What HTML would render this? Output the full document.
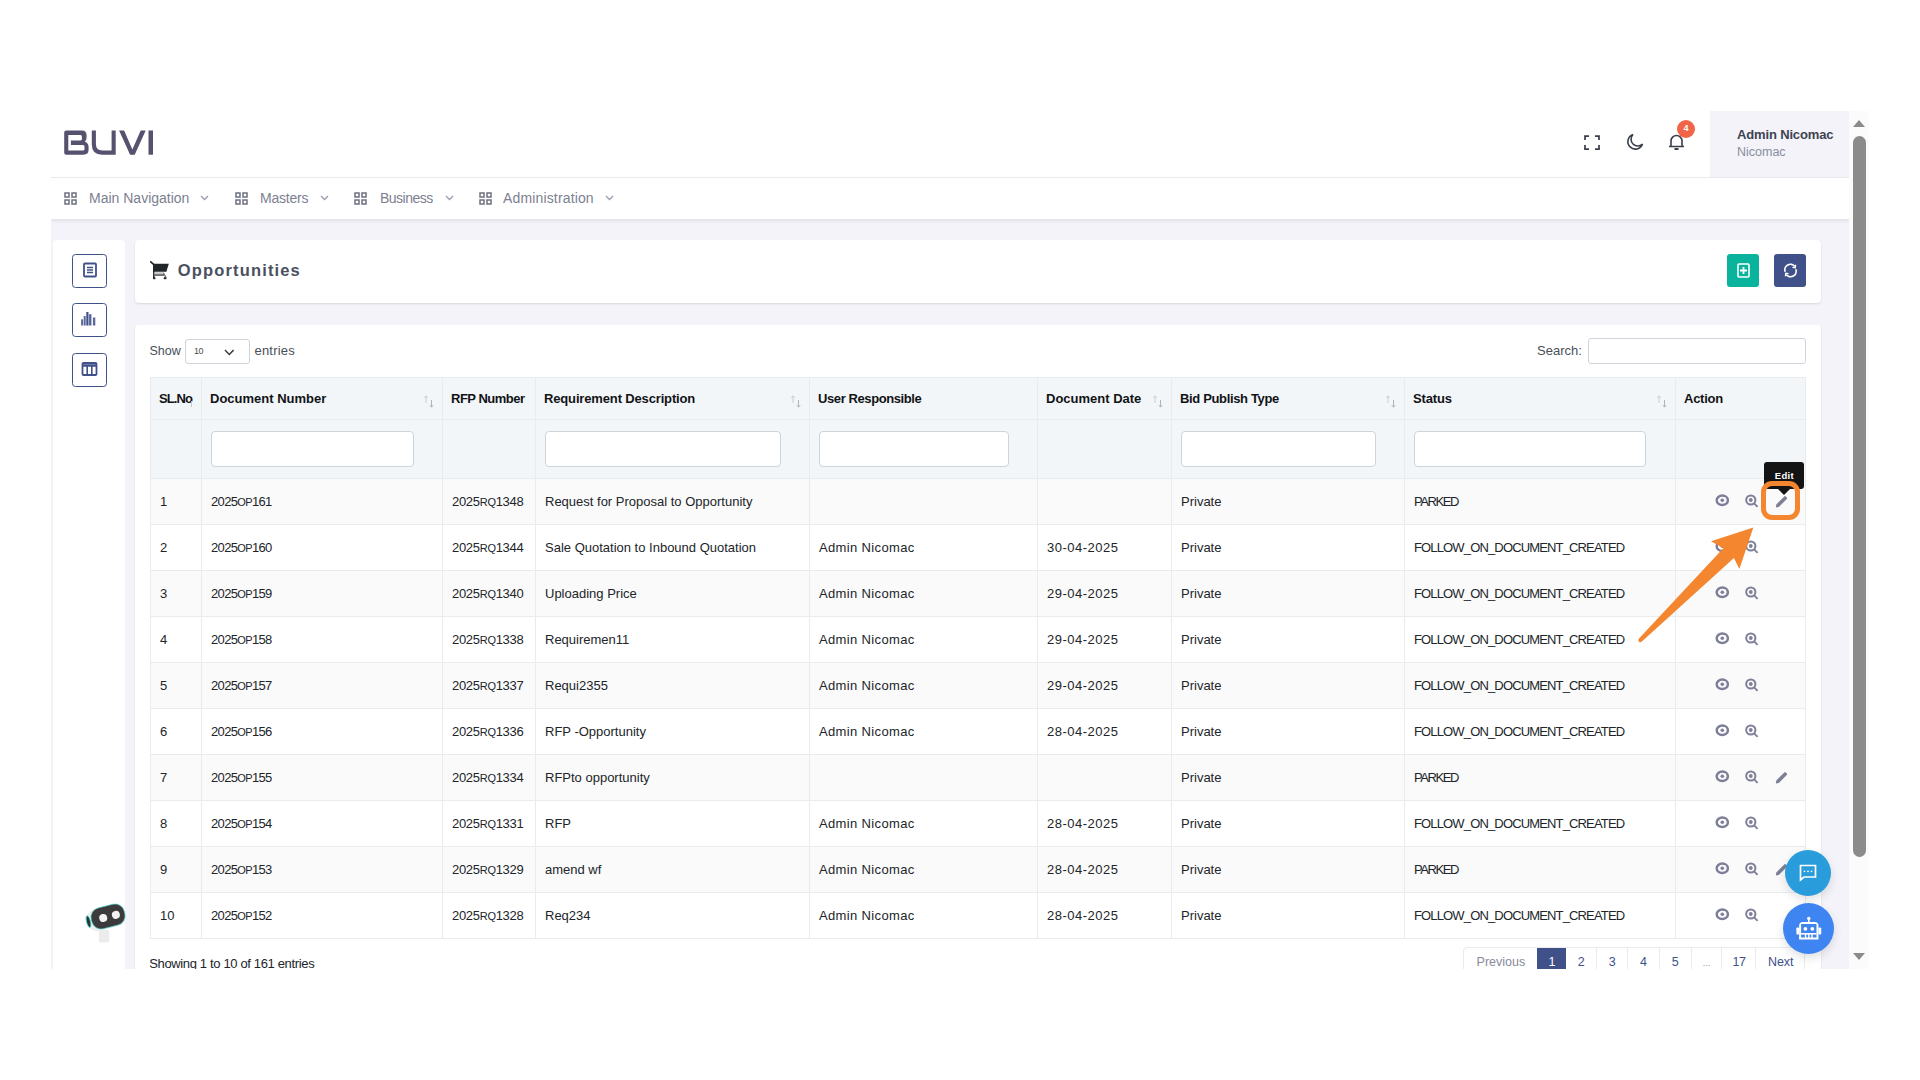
<!DOCTYPE html>
<html><head><meta charset="utf-8">
<style>
*{box-sizing:border-box;margin:0;padding:0}
html,body{width:1920px;height:1080px;overflow:hidden;background:#fff;font-family:"Liberation Sans",sans-serif;color:#212529}
.abs{position:absolute}
#app{position:absolute;left:51px;top:111px;width:1798px;height:858px;overflow:hidden;background:#f3f3f9}
#hdr{position:absolute;left:0;top:0;width:1798px;height:66.8px;background:#fff;border-bottom:1px solid #e9ebec}
#user{position:absolute;left:1659px;top:0;width:139px;height:65.6px;background:#f3f3f9}
#nav{position:absolute;left:0;top:66.8px;width:1798px;height:41.6px;background:#fff;box-shadow:0 2px 3px rgba(56,65,74,.10)}
.nv{position:absolute;top:12.5px;font-size:14px;color:#7d8090;white-space:nowrap}
.card{position:absolute;background:#fff;border-radius:4px;box-shadow:0 1px 2px rgba(56,65,74,.15)}
.sbox{position:absolute;left:19px;width:35px;height:34px;border:1.9px solid #405189;border-radius:3.5px}
#sb{position:absolute;left:1849px;top:111px;width:20px;height:858px;background:#fbfbfb}
table{border-collapse:collapse;table-layout:fixed;position:absolute;left:15.5px;top:52px;width:1656px}
td,th{border:1px solid #e9ebec;font-size:13px;white-space:nowrap;overflow:hidden;padding:0 9px;text-align:left;vertical-align:middle}
th{font-weight:700;background:#f3f6f9;height:41.5px;position:relative;color:#111316;padding-left:8px}
tr.f td{background:#f3f6f9;height:59.5px}
tr.r td{height:46px;color:#212529}
tr.r:nth-child(odd) td{background:#fafafa}
.fi{display:block;height:36px;border:1px solid #ced4da;border-radius:4px;background:#fff}
.sc{font-variant:small-caps;font-size:15.5px;line-height:0}
td.dn{letter-spacing:-0.65px}
td.rn{letter-spacing:-0.3px}
td.dt{letter-spacing:0.5px}
td.un{letter-spacing:0.35px}
.st{letter-spacing:-0.85px}
.pk{letter-spacing:-1.4px}
.srt{position:absolute;top:17px;right:8px;width:10px;height:13px}

.act{position:relative;height:45px}
td.ac{padding:0}
.ic{position:absolute;top:15px}
.pg{position:absolute;top:0;height:22px;border-left:1px solid #e9ebec;font-size:12.5px;color:#405189;text-align:center;padding-top:6px}
</style></head><body>

<div id="app">
  <!-- header -->
  <div id="hdr">
    <svg class="abs" style="left:9px;top:14px" width="100" height="35" viewBox="60 125 100 35">
      <path fill="#56516f" fill-rule="evenodd" d="M64.2,132.5 Q64.2,130.5 66.2,130.5 H82 Q86.6,130.5 86.6,135.5 V137 Q86.6,140.2 84.8,141.6 Q88.6,143 88.6,147.5 V149.5 Q88.6,154.7 83.4,154.7 H66.2 Q64.2,154.7 64.2,152.7 Z M68.3,135 H80.5 Q81.9,135 81.9,136.5 V139 Q81.9,140.4 80.5,140.4 H70.9 V145 H83 Q84.5,145 84.5,146.5 V149 Q84.5,150.5 83,150.5 H68.3 Z"/>
      <path fill="#56516f" d="M91.8,130.5 H95.9 V144 Q95.9,150.5 102.4,150.5 H111.6 V130.5 H115.7 V154.7 H102 Q91.8,154.7 91.8,144.5 Z"/>
      <path fill="#56516f" d="M119.1,130.5 H124.1 L132.4,149.5 L140.7,130.5 H145.7 L134.7,154.7 H130.1 Z"/>
      <rect fill="#56516f" x="148.5" y="130.5" width="4.5" height="24.2"/>
    </svg>
    <!-- fullscreen -->
    <svg class="abs" style="left:1533px;top:24px" width="16" height="15" viewBox="0 0 16 15" fill="none" stroke="#3a3f4a" stroke-width="1.75">
      <path d="M1,5 V1 H5 M11,1 H15 V5 M15,10 V14 H11 M5,14 H1 V10"/>
    </svg>
    <!-- moon -->
    <svg class="abs" style="left:1574px;top:22px" width="19" height="18" viewBox="0 0 19 18" fill="none" stroke="#3a3f4a" stroke-width="1.6">
      <path d="M8,1.5 A7.5,7.5 0 1 0 17.5,11 A6,6 0 0 1 8,1.5 Z"/>
    </svg>
    <!-- bell -->
    <svg class="abs" style="left:1617px;top:23px" width="17" height="17" viewBox="0 0 17 17" fill="none" stroke="#3a3f4a" stroke-width="1.6">
      <path d="M3,12 V7 A5.5,5.5 0 0 1 14,7 V12 M1,12.5 H16"/><path d="M6.5,15 H10.5" stroke-width="2"/>
    </svg>
    <div class="abs" style="left:1626px;top:9px;width:18px;height:18px;border-radius:9px;background:#f06548;color:#fff;font-size:9px;font-weight:700;text-align:center;line-height:17px">4</div>
    <div id="user">
      <div class="abs" style="left:27px;top:16px;font-size:13px;font-weight:700;color:#3d4351;white-space:nowrap;letter-spacing:-0.15px">Admin Nicomac</div>
      <div class="abs" style="left:27px;top:34px;font-size:12.5px;color:#8a8ca0;white-space:nowrap">Nicomac</div>
    </div>
  </div>
  <!-- nav -->
  <div id="nav">
    <svg class="abs" style="left:13px;top:14px" width="13" height="13" viewBox="0 0 13 13" fill="none" stroke="#6d7080" stroke-width="1.5"><rect x="1" y="1" width="4" height="4"/><rect x="8" y="1" width="4" height="4"/><rect x="1" y="8" width="4" height="4"/><rect x="8" y="8" width="4" height="4"/></svg>
    <div class="nv" style="left:38px">Main Navigation</div>
    <svg class="abs" style="left:149px;top:17px" width="9" height="6" viewBox="0 0 9 6" fill="none" stroke="#9a9dab" stroke-width="1.3"><path d="M1,1 L4.5,4.5 L8,1"/></svg>
    <svg class="abs" style="left:184px;top:14px" width="13" height="13" viewBox="0 0 13 13" fill="none" stroke="#6d7080" stroke-width="1.5"><rect x="1" y="1" width="4" height="4"/><rect x="8" y="1" width="4" height="4"/><rect x="1" y="8" width="4" height="4"/><rect x="8" y="8" width="4" height="4"/></svg>
    <div class="nv" style="left:209px;letter-spacing:-0.2px">Masters</div>
    <svg class="abs" style="left:269px;top:17px" width="9" height="6" viewBox="0 0 9 6" fill="none" stroke="#9a9dab" stroke-width="1.3"><path d="M1,1 L4.5,4.5 L8,1"/></svg>
    <svg class="abs" style="left:303px;top:14px" width="13" height="13" viewBox="0 0 13 13" fill="none" stroke="#6d7080" stroke-width="1.5"><rect x="1" y="1" width="4" height="4"/><rect x="8" y="1" width="4" height="4"/><rect x="1" y="8" width="4" height="4"/><rect x="8" y="8" width="4" height="4"/></svg>
    <div class="nv" style="left:329px;letter-spacing:-0.5px">Business</div>
    <svg class="abs" style="left:394px;top:17px" width="9" height="6" viewBox="0 0 9 6" fill="none" stroke="#9a9dab" stroke-width="1.3"><path d="M1,1 L4.5,4.5 L8,1"/></svg>
    <svg class="abs" style="left:428px;top:14px" width="13" height="13" viewBox="0 0 13 13" fill="none" stroke="#6d7080" stroke-width="1.5"><rect x="1" y="1" width="4" height="4"/><rect x="8" y="1" width="4" height="4"/><rect x="1" y="8" width="4" height="4"/><rect x="8" y="8" width="4" height="4"/></svg>
    <div class="nv" style="left:452px;letter-spacing:0.15px">Administration</div>
    <svg class="abs" style="left:554px;top:17px" width="9" height="6" viewBox="0 0 9 6" fill="none" stroke="#9a9dab" stroke-width="1.3"><path d="M1,1 L4.5,4.5 L8,1"/></svg>
  </div>

  <!-- sidebar card -->
  <div class="card" style="left:2px;top:129px;width:72px;height:760px;box-shadow:none">
    <div class="sbox" style="top:14px"><svg class="abs" style="left:9px;top:7px" width="16" height="16" viewBox="0 0 16 16" fill="none" stroke="#405189" stroke-width="1.8"><rect x="2" y="1.5" width="12" height="13" rx="1"/><path d="M5,5.5 H11 M5,8 H11 M5,10.5 H11" stroke-width="1.4"/></svg></div>
    <div class="sbox" style="top:62.5px"><svg class="abs" style="left:8px;top:7px" width="17" height="17" viewBox="0 0 17 17" fill="#405189"><rect x="0.1" y="8.3" width="2" height="6.2" opacity=".85"/><rect x="2.7" y="5" width="2" height="9.5" opacity=".85"/><rect x="5.3" y="1" width="2.2" height="13.5"/><rect x="8.1" y="3.2" width="2.3" height="11.3" opacity=".9"/><rect x="11.9" y="6.5" width="2.4" height="8" opacity=".85"/></svg></div>
    <div class="sbox" style="top:112.5px"><svg class="abs" style="left:8px;top:7px" width="17" height="16" viewBox="0 0 17 16" fill="none" stroke="#405189" stroke-width="1.8"><rect x="1.5" y="2" width="14" height="12" rx="1"/><path d="M1.5,4.5 H15.5" stroke-width="2.5"/><path d="M6.2,5 V14 M10.8,5 V14" stroke-width="1.6"/></svg></div>
  </div>

  <!-- title card -->
  <div class="card" style="left:83.5px;top:129px;width:1686.5px;height:62.8px">
    <svg class="abs" style="left:15px;top:21px" width="20" height="20" viewBox="0 0 20 20"><path d="M0.8,0.8 L3.6,3.4" stroke="#212529" stroke-width="1.7" stroke-linecap="round"/><rect x="3" y="3" width="1.6" height="14.5" fill="#2a2e33"/><path d="M3,2.8 H18.8 L16.4,10.8 H3 Z" fill="#212529"/><rect x="4.5" y="11.2" width="9.5" height="2.1" fill="#c3c5c8"/><rect x="4.5" y="13.3" width="9.5" height="1.5" fill="#4a4d52"/><path d="M13.5,12 L16,16.5" stroke="#6a6d72" stroke-width="1.3"/><rect x="3.2" y="16.2" width="2.2" height="2" fill="#212529"/><rect x="13.8" y="16.2" width="2.6" height="2" fill="#212529"/></svg><div class="abs" style="left:43.3px;top:20.8px;font-size:16.5px;font-weight:700;color:#4a5060;letter-spacing:1.15px;white-space:nowrap">Opportunities</div>
    <div class="abs" style="left:1592.5px;top:14px;width:32px;height:33px;background:#0ab39c;border-radius:3px"><svg class="abs" style="left:9.5px;top:9px" width="13" height="15" viewBox="0 0 13 15" fill="none" stroke="#fff" stroke-width="1.6"><rect x="1" y="1" width="11" height="13" rx="1"/><path d="M6.5,4 V11 M3,7.5 H10" stroke-width="1.8"/></svg></div>
    <div class="abs" style="left:1639.5px;top:14px;width:32px;height:33px;background:#405189;border-radius:3px"><svg class="abs" style="left:9px;top:9px" width="15" height="15" viewBox="0 0 15 15" fill="none" stroke="#fff" stroke-width="1.7"><path d="M2.2,8.8 A5.5,5.5 0 0 1 11.8,3.6"/><path d="M12.8,6.2 A5.5,5.5 0 0 1 3.2,11.4"/><path d="M12.6,1.8 L12.3,4.8 L9.4,4.4" stroke-width="1.3"/><path d="M2.4,13.2 L2.7,10.2 L5.6,10.6" stroke-width="1.3"/></svg></div>
  </div>

  <!-- table card -->
  <div class="card" id="tc" style="left:83.5px;top:214px;width:1686.5px;height:700px">
    <div class="abs" style="left:15px;top:19px;font-size:12.5px;color:#495057">Show</div>
    <div class="abs" style="left:50.5px;top:13.6px;width:65px;height:25.5px;border:1px solid #ced4da;border-radius:3px;background:#fff"><span class="abs" style="left:8px;top:6.8px;font-size:9px;color:#495057;letter-spacing:-0.6px">10</span><svg class="abs" style="left:37.8px;top:9px" width="10.5" height="7" viewBox="0 0 11 7" fill="none" stroke="#343a40" stroke-width="1.5"><path d="M1,1 L5.5,5.5 L10,1"/></svg></div>
    <div class="abs" style="left:120px;top:17.5px;font-size:13px;color:#495057;letter-spacing:0.2px">entries</div>
    <div class="abs" style="left:1402.5px;top:18.3px;font-size:13px;color:#495057">Search:</div>
    <div class="abs" style="left:1453px;top:13.3px;width:218px;height:26px;border:1px solid #ced4da;border-radius:3px;background:#fff"></div>

    <table>
      <colgroup><col style="width:51px"><col style="width:241px"><col style="width:93px"><col style="width:274px"><col style="width:228px"><col style="width:134px"><col style="width:233px"><col style="width:271px"><col style="width:130px"></colgroup>
      <tr><th style="letter-spacing:-0.9px">SL.No<span class="abs" style="left:40px;top:23px;width:1px;height:6px;background:#c3c6cb"></span></th><th>Document Number<svg class="srt" width="10" height="13" viewBox="0 0 10 13"><path d="M2,1 V8 M0.3,2.8 L2,0.8 L3.7,2.8" fill="none" stroke="#c9ccd1" stroke-width="1"/><path d="M7.5,5 V12 M5.8,10.2 L7.5,12.2 L9.2,10.2" fill="none" stroke="#b0b4ba" stroke-width="1"/></svg></th><th style="letter-spacing:-0.5px">RFP Number</th><th style="letter-spacing:-0.15px">Requirement Description<svg class="srt" width="10" height="13" viewBox="0 0 10 13"><path d="M2,1 V8 M0.3,2.8 L2,0.8 L3.7,2.8" fill="none" stroke="#c9ccd1" stroke-width="1"/><path d="M7.5,5 V12 M5.8,10.2 L7.5,12.2 L9.2,10.2" fill="none" stroke="#b0b4ba" stroke-width="1"/></svg></th><th style="letter-spacing:-0.4px">User Responsible</th><th>Document Date<svg class="srt" width="10" height="13" viewBox="0 0 10 13"><path d="M2,1 V8 M0.3,2.8 L2,0.8 L3.7,2.8" fill="none" stroke="#c9ccd1" stroke-width="1"/><path d="M7.5,5 V12 M5.8,10.2 L7.5,12.2 L9.2,10.2" fill="none" stroke="#b0b4ba" stroke-width="1"/></svg></th><th style="letter-spacing:-0.35px">Bid Publish Type<svg class="srt" width="10" height="13" viewBox="0 0 10 13"><path d="M2,1 V8 M0.3,2.8 L2,0.8 L3.7,2.8" fill="none" stroke="#c9ccd1" stroke-width="1"/><path d="M7.5,5 V12 M5.8,10.2 L7.5,12.2 L9.2,10.2" fill="none" stroke="#b0b4ba" stroke-width="1"/></svg></th><th style="letter-spacing:-0.15px">Status<svg class="srt" width="10" height="13" viewBox="0 0 10 13"><path d="M2,1 V8 M0.3,2.8 L2,0.8 L3.7,2.8" fill="none" stroke="#c9ccd1" stroke-width="1"/><path d="M7.5,5 V12 M5.8,10.2 L7.5,12.2 L9.2,10.2" fill="none" stroke="#b0b4ba" stroke-width="1"/></svg></th><th style="letter-spacing:-0.25px">Action</th></tr>
      <tr class="f"><td></td><td><span class="fi" style="width:203px"></span></td><td></td><td><span class="fi" style="width:236px"></span></td><td><span class="fi" style="width:190px"></span></td><td></td><td><span class="fi" style="width:195px"></span></td><td><span class="fi" style="width:232px"></span></td><td></td></tr>
          <tr class="r"><td>1</td><td class="dn">2025<span class=sc>op</span>161</td><td class="rn">2025<span class=sc>rq</span>1348</td><td>Request for Proposal to Opportunity</td><td></td><td class="dt"></td><td>Private</td><td class="pk">PARKED</td><td class="ac"><div class="act"><svg class="ic" style="left:39px;top:14.6px" width="15" height="13" viewBox="0 0 15 13"><ellipse cx="7.3" cy="6.3" rx="5.6" ry="4.7" fill="none" stroke="#7c7f97" stroke-width="2.5"/><circle cx="7.3" cy="6.3" r="1.8" fill="#7c7f97"/></svg><svg class="ic" style="left:68.6px;top:14.6px" width="14" height="14" viewBox="0 0 14 14"><circle cx="5.8" cy="6" r="4.6" fill="none" stroke="#7c7f97" stroke-width="2"/><path d="M9.2,9.4 L12.6,12.8" stroke="#7c7f97" stroke-width="1.9"/><circle cx="5.8" cy="6" r="1.9" fill="#7c7f97"/></svg><svg class="ic" style="left:98.5px;top:15.5px" width="13" height="13" viewBox="0 0 13 13"><path d="M0.8,12.4 L1.3,9.4 L9.3,1.4 Q10,0.7 10.7,1.4 L11.8,2.5 Q12.5,3.2 11.8,3.9 L3.8,11.9 Z" fill="#7c7f97"/></svg></div></td></tr>
      <tr class="r"><td>2</td><td class="dn">2025<span class=sc>op</span>160</td><td class="rn">2025<span class=sc>rq</span>1344</td><td>Sale Quotation to Inbound Quotation</td><td class="un">Admin Nicomac</td><td class="dt">30-04-2025</td><td>Private</td><td class="st">FOLLOW_ON_DOCUMENT_CREATED</td><td class="ac"><div class="act"><svg class="ic" style="left:39px;top:14.6px" width="15" height="13" viewBox="0 0 15 13"><ellipse cx="7.3" cy="6.3" rx="5.6" ry="4.7" fill="none" stroke="#7c7f97" stroke-width="2.5"/><circle cx="7.3" cy="6.3" r="1.8" fill="#7c7f97"/></svg><svg class="ic" style="left:68.6px;top:14.6px" width="14" height="14" viewBox="0 0 14 14"><circle cx="5.8" cy="6" r="4.6" fill="none" stroke="#7c7f97" stroke-width="2"/><path d="M9.2,9.4 L12.6,12.8" stroke="#7c7f97" stroke-width="1.9"/><circle cx="5.8" cy="6" r="1.9" fill="#7c7f97"/></svg></div></td></tr>
      <tr class="r"><td>3</td><td class="dn">2025<span class=sc>op</span>159</td><td class="rn">2025<span class=sc>rq</span>1340</td><td>Uploading Price</td><td class="un">Admin Nicomac</td><td class="dt">29-04-2025</td><td>Private</td><td class="st">FOLLOW_ON_DOCUMENT_CREATED</td><td class="ac"><div class="act"><svg class="ic" style="left:39px;top:14.6px" width="15" height="13" viewBox="0 0 15 13"><ellipse cx="7.3" cy="6.3" rx="5.6" ry="4.7" fill="none" stroke="#7c7f97" stroke-width="2.5"/><circle cx="7.3" cy="6.3" r="1.8" fill="#7c7f97"/></svg><svg class="ic" style="left:68.6px;top:14.6px" width="14" height="14" viewBox="0 0 14 14"><circle cx="5.8" cy="6" r="4.6" fill="none" stroke="#7c7f97" stroke-width="2"/><path d="M9.2,9.4 L12.6,12.8" stroke="#7c7f97" stroke-width="1.9"/><circle cx="5.8" cy="6" r="1.9" fill="#7c7f97"/></svg></div></td></tr>
      <tr class="r"><td>4</td><td class="dn">2025<span class=sc>op</span>158</td><td class="rn">2025<span class=sc>rq</span>1338</td><td>Requiremen11</td><td class="un">Admin Nicomac</td><td class="dt">29-04-2025</td><td>Private</td><td class="st">FOLLOW_ON_DOCUMENT_CREATED</td><td class="ac"><div class="act"><svg class="ic" style="left:39px;top:14.6px" width="15" height="13" viewBox="0 0 15 13"><ellipse cx="7.3" cy="6.3" rx="5.6" ry="4.7" fill="none" stroke="#7c7f97" stroke-width="2.5"/><circle cx="7.3" cy="6.3" r="1.8" fill="#7c7f97"/></svg><svg class="ic" style="left:68.6px;top:14.6px" width="14" height="14" viewBox="0 0 14 14"><circle cx="5.8" cy="6" r="4.6" fill="none" stroke="#7c7f97" stroke-width="2"/><path d="M9.2,9.4 L12.6,12.8" stroke="#7c7f97" stroke-width="1.9"/><circle cx="5.8" cy="6" r="1.9" fill="#7c7f97"/></svg></div></td></tr>
      <tr class="r"><td>5</td><td class="dn">2025<span class=sc>op</span>157</td><td class="rn">2025<span class=sc>rq</span>1337</td><td>Requi2355</td><td class="un">Admin Nicomac</td><td class="dt">29-04-2025</td><td>Private</td><td class="st">FOLLOW_ON_DOCUMENT_CREATED</td><td class="ac"><div class="act"><svg class="ic" style="left:39px;top:14.6px" width="15" height="13" viewBox="0 0 15 13"><ellipse cx="7.3" cy="6.3" rx="5.6" ry="4.7" fill="none" stroke="#7c7f97" stroke-width="2.5"/><circle cx="7.3" cy="6.3" r="1.8" fill="#7c7f97"/></svg><svg class="ic" style="left:68.6px;top:14.6px" width="14" height="14" viewBox="0 0 14 14"><circle cx="5.8" cy="6" r="4.6" fill="none" stroke="#7c7f97" stroke-width="2"/><path d="M9.2,9.4 L12.6,12.8" stroke="#7c7f97" stroke-width="1.9"/><circle cx="5.8" cy="6" r="1.9" fill="#7c7f97"/></svg></div></td></tr>
      <tr class="r"><td>6</td><td class="dn">2025<span class=sc>op</span>156</td><td class="rn">2025<span class=sc>rq</span>1336</td><td>RFP -Opportunity</td><td class="un">Admin Nicomac</td><td class="dt">28-04-2025</td><td>Private</td><td class="st">FOLLOW_ON_DOCUMENT_CREATED</td><td class="ac"><div class="act"><svg class="ic" style="left:39px;top:14.6px" width="15" height="13" viewBox="0 0 15 13"><ellipse cx="7.3" cy="6.3" rx="5.6" ry="4.7" fill="none" stroke="#7c7f97" stroke-width="2.5"/><circle cx="7.3" cy="6.3" r="1.8" fill="#7c7f97"/></svg><svg class="ic" style="left:68.6px;top:14.6px" width="14" height="14" viewBox="0 0 14 14"><circle cx="5.8" cy="6" r="4.6" fill="none" stroke="#7c7f97" stroke-width="2"/><path d="M9.2,9.4 L12.6,12.8" stroke="#7c7f97" stroke-width="1.9"/><circle cx="5.8" cy="6" r="1.9" fill="#7c7f97"/></svg></div></td></tr>
      <tr class="r"><td>7</td><td class="dn">2025<span class=sc>op</span>155</td><td class="rn">2025<span class=sc>rq</span>1334</td><td>RFPto opportunity</td><td></td><td class="dt"></td><td>Private</td><td class="pk">PARKED</td><td class="ac"><div class="act"><svg class="ic" style="left:39px;top:14.6px" width="15" height="13" viewBox="0 0 15 13"><ellipse cx="7.3" cy="6.3" rx="5.6" ry="4.7" fill="none" stroke="#7c7f97" stroke-width="2.5"/><circle cx="7.3" cy="6.3" r="1.8" fill="#7c7f97"/></svg><svg class="ic" style="left:68.6px;top:14.6px" width="14" height="14" viewBox="0 0 14 14"><circle cx="5.8" cy="6" r="4.6" fill="none" stroke="#7c7f97" stroke-width="2"/><path d="M9.2,9.4 L12.6,12.8" stroke="#7c7f97" stroke-width="1.9"/><circle cx="5.8" cy="6" r="1.9" fill="#7c7f97"/></svg><svg class="ic" style="left:98.5px;top:15.5px" width="13" height="13" viewBox="0 0 13 13"><path d="M0.8,12.4 L1.3,9.4 L9.3,1.4 Q10,0.7 10.7,1.4 L11.8,2.5 Q12.5,3.2 11.8,3.9 L3.8,11.9 Z" fill="#7c7f97"/></svg></div></td></tr>
      <tr class="r"><td>8</td><td class="dn">2025<span class=sc>op</span>154</td><td class="rn">2025<span class=sc>rq</span>1331</td><td>RFP</td><td class="un">Admin Nicomac</td><td class="dt">28-04-2025</td><td>Private</td><td class="st">FOLLOW_ON_DOCUMENT_CREATED</td><td class="ac"><div class="act"><svg class="ic" style="left:39px;top:14.6px" width="15" height="13" viewBox="0 0 15 13"><ellipse cx="7.3" cy="6.3" rx="5.6" ry="4.7" fill="none" stroke="#7c7f97" stroke-width="2.5"/><circle cx="7.3" cy="6.3" r="1.8" fill="#7c7f97"/></svg><svg class="ic" style="left:68.6px;top:14.6px" width="14" height="14" viewBox="0 0 14 14"><circle cx="5.8" cy="6" r="4.6" fill="none" stroke="#7c7f97" stroke-width="2"/><path d="M9.2,9.4 L12.6,12.8" stroke="#7c7f97" stroke-width="1.9"/><circle cx="5.8" cy="6" r="1.9" fill="#7c7f97"/></svg></div></td></tr>
      <tr class="r"><td>9</td><td class="dn">2025<span class=sc>op</span>153</td><td class="rn">2025<span class=sc>rq</span>1329</td><td>amend wf</td><td class="un">Admin Nicomac</td><td class="dt">28-04-2025</td><td>Private</td><td class="pk">PARKED</td><td class="ac"><div class="act"><svg class="ic" style="left:39px;top:14.6px" width="15" height="13" viewBox="0 0 15 13"><ellipse cx="7.3" cy="6.3" rx="5.6" ry="4.7" fill="none" stroke="#7c7f97" stroke-width="2.5"/><circle cx="7.3" cy="6.3" r="1.8" fill="#7c7f97"/></svg><svg class="ic" style="left:68.6px;top:14.6px" width="14" height="14" viewBox="0 0 14 14"><circle cx="5.8" cy="6" r="4.6" fill="none" stroke="#7c7f97" stroke-width="2"/><path d="M9.2,9.4 L12.6,12.8" stroke="#7c7f97" stroke-width="1.9"/><circle cx="5.8" cy="6" r="1.9" fill="#7c7f97"/></svg><svg class="ic" style="left:98.5px;top:15.5px" width="13" height="13" viewBox="0 0 13 13"><path d="M0.8,12.4 L1.3,9.4 L9.3,1.4 Q10,0.7 10.7,1.4 L11.8,2.5 Q12.5,3.2 11.8,3.9 L3.8,11.9 Z" fill="#7c7f97"/></svg></div></td></tr>
      <tr class="r"><td>10</td><td class="dn">2025<span class=sc>op</span>152</td><td class="rn">2025<span class=sc>rq</span>1328</td><td>Req234</td><td class="un">Admin Nicomac</td><td class="dt">28-04-2025</td><td>Private</td><td class="st">FOLLOW_ON_DOCUMENT_CREATED</td><td class="ac"><div class="act"><svg class="ic" style="left:39px;top:14.6px" width="15" height="13" viewBox="0 0 15 13"><ellipse cx="7.3" cy="6.3" rx="5.6" ry="4.7" fill="none" stroke="#7c7f97" stroke-width="2.5"/><circle cx="7.3" cy="6.3" r="1.8" fill="#7c7f97"/></svg><svg class="ic" style="left:68.6px;top:14.6px" width="14" height="14" viewBox="0 0 14 14"><circle cx="5.8" cy="6" r="4.6" fill="none" stroke="#7c7f97" stroke-width="2"/><path d="M9.2,9.4 L12.6,12.8" stroke="#7c7f97" stroke-width="1.9"/><circle cx="5.8" cy="6" r="1.9" fill="#7c7f97"/></svg></div></td></tr>
    </table>
    <div class="abs" style="left:14.7px;top:631px;font-size:13px;color:#212529;letter-spacing:-0.35px;white-space:nowrap">Showing 1 to 10 of 161 entries</div>
  </div>

  <!-- pagination -->
  <div class="abs" style="left:1412.3px;top:836.3px;width:342px;height:30px;border:1px solid #e9ebec;border-radius:4px 4px 0 0;background:#fff;overflow:hidden">
    <div class="pg" style="left:0;width:73.2px;border-left:none;color:#878a99;padding-top:6.5px">Previous</div>
    <div class="pg" style="left:73.2px;width:28.8px;background:#405189;color:#fff;border-left:none;padding-top:6.5px">1</div>
    <div class="pg" style="left:102px;width:30px;border-left:none;padding-top:6.5px">2</div>
    <div class="pg" style="left:132px;width:31px;padding-top:6.5px">3</div>
    <div class="pg" style="left:162.9px;width:31.5px;padding-top:6.5px">4</div>
    <div class="pg" style="left:194.4px;width:32px;padding-top:6.5px">5</div>
    <div class="pg" style="left:226.3px;width:31px;padding-top:11px;font-size:8px">…</div>
    <div class="pg" style="left:257.2px;width:34px;padding-top:6.5px;letter-spacing:-0.5px">17</div>
    <div class="pg" style="left:291.2px;width:49.5px;padding-top:6.5px">Next</div>
  </div>
</div>
<div id="sb"></div>
<!-- scrollbar parts -->
<div class="abs" style="left:1853px;top:120px;width:0;height:0;border-left:6.5px solid transparent;border-right:6.5px solid transparent;border-bottom:7px solid #8b8b8b"></div>
<div class="abs" style="left:1853px;top:136px;width:13px;height:721px;border-radius:6.5px;background:#8b8b8b"></div>
<div class="abs" style="left:1853px;top:953px;width:0;height:0;border-left:6.5px solid transparent;border-right:6.5px solid transparent;border-top:7px solid #8b8b8b"></div>

<!-- floating buttons -->
<div class="abs" style="left:1785px;top:850px;width:46px;height:46px;border-radius:50%;background:#299cdb;box-shadow:0 4px 10px rgba(0,0,0,.12)">
  <svg class="abs" style="left:14px;top:13.5px" width="18" height="18" viewBox="0 0 18 18" fill="none" stroke="#fff" stroke-width="1.7"><path d="M1.5,1.5 H16.5 V13 H5 L1.5,16 Z"/><circle cx="5.5" cy="7.3" r=".9" fill="#fff" stroke="none"/><circle cx="9" cy="7.3" r=".9" fill="#fff" stroke="none"/><circle cx="12.5" cy="7.3" r=".9" fill="#fff" stroke="none"/></svg>
</div>
<div class="abs" style="left:1782.5px;top:903px;width:51px;height:51px;border-radius:50%;background:#3f85f2;box-shadow:0 4px 10px rgba(0,0,0,.12)">
  <svg class="abs" style="left:13px;top:12.5px" width="26" height="25" viewBox="0 0 26 25" fill="#fff">
    <circle cx="12.8" cy="2.4" r="1.7"/><rect x="12" y="3.6" width="1.6" height="2.6"/>
    <path fill-rule="evenodd" d="M7,6 H18.5 Q22.5,6 22.5,10 V23.5 H3.1 V10 Q3.1,6 7,6 Z M5.1,8 V21.5 H20.5 V8 Z"/>
    <circle cx="9.4" cy="12.8" r="1.9"/><circle cx="16.3" cy="12.8" r="1.9"/>
    <rect x="5.1" y="17" width="15.4" height="1.6"/><rect x="8.9" y="17" width="1.4" height="5"/><rect x="12.1" y="17" width="1.4" height="5"/><rect x="15.3" y="17" width="1.4" height="5"/>
    <rect x="0.4" y="11.5" width="2.7" height="7" rx="0.8"/><rect x="22.5" y="11.5" width="2.7" height="7" rx="0.8"/>
  </svg>
</div>

<!-- tooltip -->
<div class="abs" style="left:1764.4px;top:461.5px;width:40px;height:27.4px;background:#141414;border-radius:3px;color:#fff;font-size:9.5px;font-weight:700;text-align:center;padding-top:8.5px;letter-spacing:0.3px">Edit</div>
<div class="abs" style="left:1777.8px;top:488.8px;width:0;height:0;border-left:6px solid transparent;border-right:6px solid transparent;border-top:6px solid #141414"></div>
<!-- orange highlight -->
<div class="abs" style="left:1761px;top:481px;width:38.5px;height:39px;border:5px solid #f4862f;border-radius:11px"></div>
<!-- arrow -->
<svg class="abs" style="left:0;top:0" width="1920" height="1080" viewBox="0 0 1920 1080">
  <path d="M1639,638.6 L1723.3,548.2 L1711,541.3 L1753.3,527.4 L1739.4,569 L1733.9,557.9 L1641.9,641.6 Q1640.3,643 1638.9,641.7 Q1637.6,640.2 1639,638.6 Z" fill="#f4862f"/>
</svg>

<!-- robot mascot -->
<svg class="abs" style="left:80px;top:898px" width="50" height="48" viewBox="80 898 50 48">
  <rect x="98.9" y="930" width="10.4" height="12.5" rx="2" fill="#ececec"/>
  <g transform="rotate(-14 107 916.5)">
    <rect x="86" y="906.5" width="40" height="22" rx="10" fill="#eeeeee"/>
    <rect x="91" y="906" width="34" height="21.5" rx="9.5" fill="#3b3b3b" stroke="#4fd8d0" stroke-width=".6"/>
    <circle cx="103" cy="917" r="4" fill="#f2f2f2"/><circle cx="116" cy="917" r="4" fill="#f2f2f2"/>
    <ellipse cx="87.8" cy="917" rx="2" ry="6" fill="#333" stroke="#44e0d8" stroke-width=".8"/>
  </g>
</svg>

</body></html>
